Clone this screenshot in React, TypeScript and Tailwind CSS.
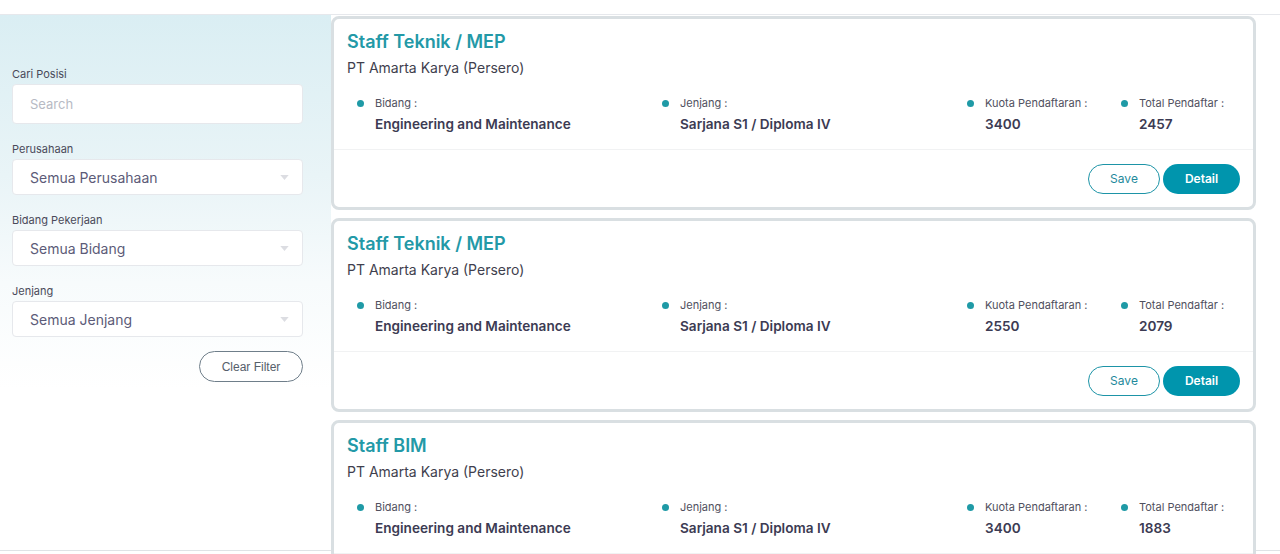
import * as React from "react";

type Job = {
  title: string;
  company: string;
  bidang: string;
  jenjang: string;
  kuota: string;
  total: string;
};

const jobs: Job[] = [
  {
    title: "Staff Teknik / MEP",
    company: "PT Amarta Karya (Persero)",
    bidang: "Engineering and Maintenance",
    jenjang: "Sarjana S1 / Diploma IV",
    kuota: "3400",
    total: "2457"
  },
  {
    title: "Staff Teknik / MEP",
    company: "PT Amarta Karya (Persero)",
    bidang: "Engineering and Maintenance",
    jenjang: "Sarjana S1 / Diploma IV",
    kuota: "2550",
    total: "2079"
  },
  {
    title: "Staff BIM",
    company: "PT Amarta Karya (Persero)",
    bidang: "Engineering and Maintenance",
    jenjang: "Sarjana S1 / Diploma IV",
    kuota: "3400",
    total: "1883"
  }
];

function Field({ label, children }: { label: string; children: React.ReactNode }) {
  return (
    <div className="flex flex-col">
      <label className="mb-[3px] text-[11px] leading-[14px] text-[#4a4a5a]">{label}</label>
      {children}
    </div>
  );
}

function Select({ value }: { value: string }) {
  return (
    <div className="flex h-[36px] items-center justify-between rounded-[4px] border border-[#e6e8ec] bg-white pl-[17px] pr-[13px]">
      <span className="text-[14px] text-[#5c5b78]">{value}</span>
      <svg viewBox="0 0 10 6" className="h-[5px] w-[9px]" aria-hidden="true">
        <path d="M0 0h10L5 6z" fill="#dcdde2" />
      </svg>
    </div>
  );
}

function Info({ label, value }: { label: string; value: string }) {
  return (
    <div className="flex items-start gap-[11px] pl-[10px]">
      <span className="mt-[4px] h-[7px] w-[7px] shrink-0 rounded-full bg-[#1f9aa6]" />
      <div className="flex flex-col">
        <span className="text-[11px] leading-[14px] text-[#50505e]">{label}</span>
        <span className="mt-[4px] text-[13.6px] font-semibold leading-[20px] text-[#3c3b53]">{value}</span>
      </div>
    </div>
  );
}

function JobCard({ job }: { job: Job }) {
  return (
    <div className="h-[194px] shrink-0 rounded-[8px] border-[3px] border-[#d9dfe2] bg-white">
      <div className="px-[13px] pt-[11px] pb-[15px]">
        <h2 className="text-[18px] font-semibold leading-[24px] text-[#2399a7]">{job.title}</h2>
        <p className="mt-[4px] text-[14px] leading-[20px] text-[#3f3f4e]">{job.company}</p>
        <div className="mt-[18px] grid grid-cols-[305px_305px_154px_1fr]">
          <Info label="Bidang :" value={job.bidang} />
          <Info label="Jenjang :" value={job.jenjang} />
          <Info label="Kuota Pendaftaran :" value={job.kuota} />
          <Info label="Total Pendaftar :" value={job.total} />
        </div>
      </div>
      <div className="h-px bg-[#f1f2f3]" />
      <div className="flex justify-end gap-[3px] px-[13px] pt-[14px]">
        <button className="h-[30px] w-[72px] rounded-full border border-[#1d94a7] bg-white text-[12px] text-[#1f8a9c]">
          Save
        </button>
        <button className="h-[30px] w-[77px] rounded-full bg-[#0095ad] text-[12px] font-semibold text-white">
          Detail
        </button>
      </div>
    </div>
  );
}

export default function App() {
  return (
    <div className="h-[554px] overflow-hidden bg-white font-['Inter',sans-serif]">
      <div className="h-[15px] border-b border-[#e6e8ec]" />
      <div className="flex h-[536px] border-b border-[#dfe3e6]">
        <aside className="w-[331px] shrink-0 bg-[linear-gradient(to_bottom,#daeef3_0%,#e9f4f7_30%,#f7fbfc_50%,#ffffff_70%)] pl-[12px] pr-[28px] pt-[52px]">
          <div className="flex flex-col gap-[18px]">
            <Field label="Cari Posisi">
              <input
                placeholder="Search"
                className="h-[40px] rounded-[4px] border border-[#e6e8ec] bg-white px-[17px] text-[13px] text-[#5c5b78] outline-none placeholder:text-[#b7bac4]"
              />
            </Field>
            <Field label="Perusahaan">
              <Select value="Semua Perusahaan" />
            </Field>
            <Field label="Bidang Pekerjaan">
              <Select value="Semua Bidang" />
            </Field>
            <Field label="Jenjang">
              <Select value="Semua Jenjang" />
            </Field>
          </div>
          <div className="mt-[14px] flex justify-end">
            <button className="h-[31px] w-[104px] rounded-full border border-[#6f7e8a] bg-white font-['Liberation_Sans',sans-serif] text-[12px] text-[#56606b]">
              Clear Filter
            </button>
          </div>
        </aside>
        <main className="flex w-[925px] flex-col gap-[8px] pt-[1px]">
          {jobs.map((job, i) => (
            <JobCard key={i} job={job} />
          ))}
        </main>
      </div>
    </div>
  );
}
